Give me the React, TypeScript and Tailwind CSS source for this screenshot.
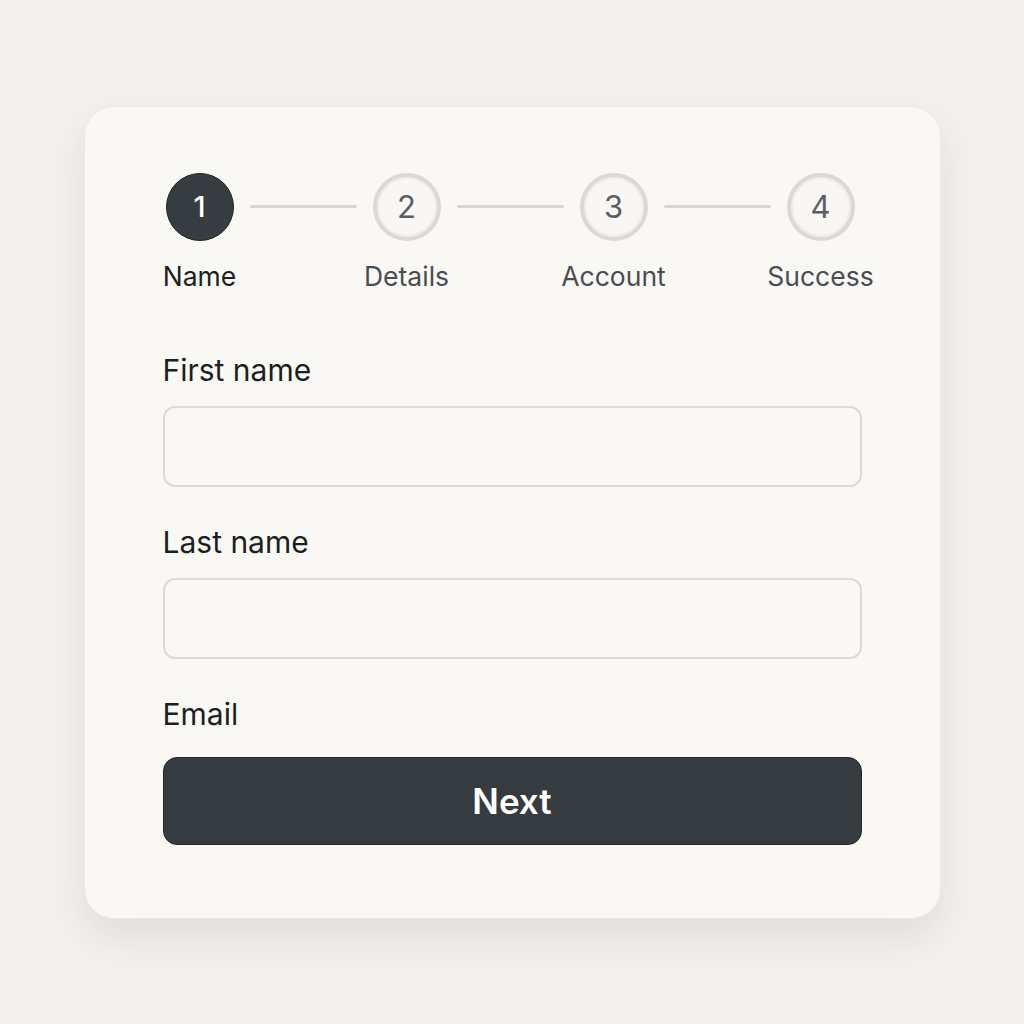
import { Fragment } from 'react';

const steps = ['Name', 'Details', 'Account', 'Success'];

function Field({ label, first }: { label: string; first?: boolean }) {
  return (
    <div>
      <label className={`block h-[34px] leading-[34px] text-[30px] text-[#1c1f22] ${first ? 'mt-[63px]' : 'mt-[38px]'}`}>
        {label}
      </label>
      <input
        type="text"
        className="block w-full mt-[19px] h-[81px] rounded-[12px] border-2 border-[#dcdad5] bg-[#f9f8f5] px-4 text-[24px] focus:outline-none"
      />
    </div>
  );
}

export default function App() {
  return (
    <div className="min-h-screen bg-[#f3f1ee] pt-[106px]" style={{ fontFamily: 'Inter, "Noto Sans", sans-serif' }}>
      <div className="mx-auto w-[857px] rounded-[30px] bg-[#f9f8f5] border border-[#ece9e4] shadow-[0_18px_40px_rgba(60,50,40,0.10)] px-[78px] pt-[66px] pb-[73px]">
        {/* stepper */}
        <div className="flex items-start ml-[3px] w-[689px]">
          {steps.map((s, i) => (
            <Fragment key={s}>
              {i > 0 && <div className="flex-1 h-[3px] mt-[32px] mx-[16px] rounded bg-[#d8d6d1]" />}
              <div className="w-[68px] flex flex-col items-center">
                {i === 0 ? (
                  <div className="w-[68px] h-[68px] rounded-full bg-[#373c41] border border-[#1f2326] flex items-center justify-center text-white text-[29px] font-medium">
                    1
                  </div>
                ) : (
                  <div className="w-[68px] h-[68px] rounded-full bg-[#f8f7f4] border-[4px] border-[#dcd9d3] shadow-[inset_0_0_0_2px_#efede9] flex items-center justify-center text-[#5c5e60] text-[31px]">
                    {i + 1}
                  </div>
                )}
                <div className={`mt-[21px] h-[28px] leading-[28px] text-[26.5px] whitespace-nowrap ${i === 0 ? 'text-[#1c1f22]' : 'text-[#4a4d50]'}`}>
                  {s}
                </div>
              </div>
            </Fragment>
          ))}
        </div>

        <Field label="First name" first />
        <Field label="Last name" />

        <label className="block mt-[38px] h-[34px] leading-[34px] text-[30px] text-[#1c1f22]">Email</label>
        <button className="mt-[26px] w-full h-[88px] rounded-[14px] bg-[#363b40] border border-[#23272b] text-white text-[35px] font-semibold">
          Next
        </button>
      </div>
    </div>
  );
}
